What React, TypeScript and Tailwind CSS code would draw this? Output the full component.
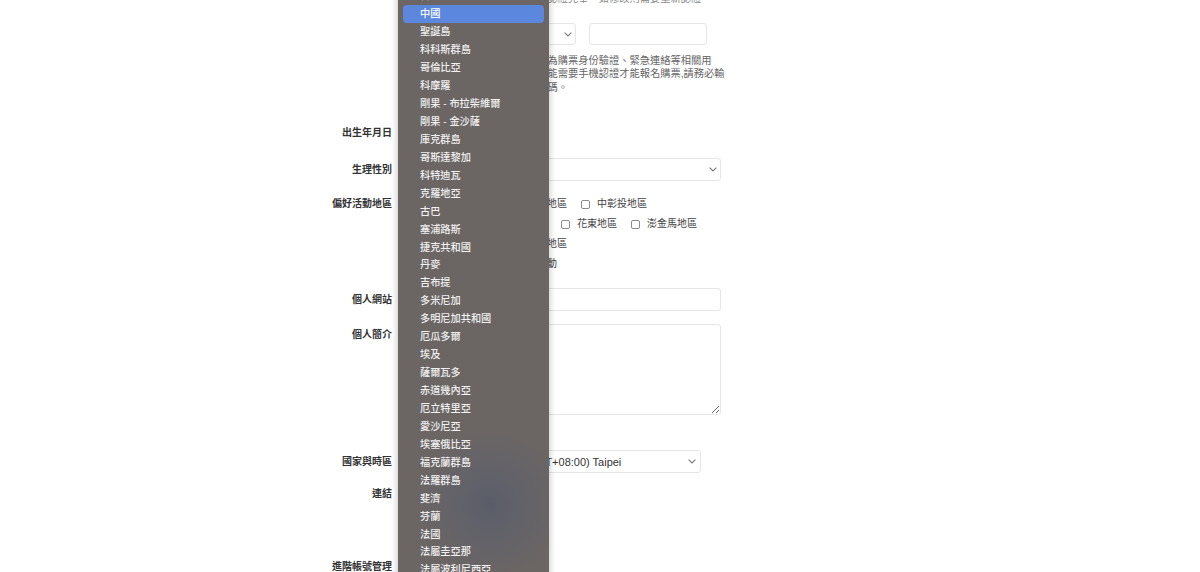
import type { ReactNode } from 'react'

// country picker list, opened over the profile form
const countries = [
  '中非共和國',
  '乍得',
  '智利',
  '中國',
  '聖誕島',
  '科科斯群島',
  '哥倫比亞',
  '科摩羅',
  '剛果 - 布拉柴維爾',
  '剛果 - 金沙薩',
  '庫克群島',
  '哥斯達黎加',
  '科特迪瓦',
  '克羅地亞',
  '古巴',
  '塞浦路斯',
  '捷克共和國',
  '丹麥',
  '吉布提',
  '多米尼加',
  '多明尼加共和國',
  '厄瓜多爾',
  '埃及',
  '薩爾瓦多',
  '赤道幾內亞',
  '厄立特里亞',
  '愛沙尼亞',
  '埃塞俄比亞',
  '福克蘭群島',
  '法羅群島',
  '斐濟',
  '芬蘭',
  '法國',
  '法屬圭亞那',
  '法屬波利尼西亞',
  '法屬南部領地',
  '加蓬',
]

const regionRows = [
  ['北北基宜地區', '桃竹苗地區', '中彰投地區'],
  ['雲嘉南地區', '高屏地區', '花東地區', '澎金馬地區'],
  ['全台地區', '海外及其他地區'],
  ['不限地區', '參加線上活動'],
]

function Chevron() {
  return (
    <svg viewBox="0 0 8 5" className="h-[5px] w-[8px] shrink-0" fill="none" stroke="#7a7a7a" strokeWidth="1.1">
      <path d="M0.6 0.6 L4 4 L7.4 0.6" />
    </svg>
  )
}

function SelectBox({ className, children }: { className: string; children?: ReactNode }) {
  return (
    <div
      className={`flex items-center justify-between rounded-[3px] border border-[#e6e6e6] bg-white pl-[11px] pr-[3px] ${className}`}
    >
      <span className="truncate text-[11px] leading-[14px] text-[#333]">{children}</span>
      <Chevron />
    </div>
  )
}

function Row({ label, labelClass = '', className = '', children }: { label: string; labelClass?: string; className?: string; children: ReactNode }) {
  return (
    <div className={`grid grid-cols-[92px_317px] gap-x-3 ${className}`}>
      <div className={`text-right text-[10px] font-semibold leading-[14px] text-[#333] ${labelClass}`}>{label}</div>
      <div>{children}</div>
    </div>
  )
}

const inputClass = 'block rounded-[3px] border border-[#e6e6e6] bg-white px-2 text-[11px] outline-none'

function ProfileForm() {
  return (
    <form className="ml-[300px] -mt-[22px] w-[421px]">
      <Row label="手機號碼">
        <div className="text-[11px] leading-[14px] text-[#333]">+886 0912-345-678</div>
        <p className="whitespace-nowrap text-[10.25px] leading-[14px] text-[#888]">
          目前登錄的手機號碼已於系統中認證完畢，如修改則需要重新認證。
        </p>
        <div className="mt-[17px] flex gap-[13px]">
          <SelectBox className="h-[22px] w-[172px]">台灣 +886</SelectBox>
          <input className={`${inputClass} h-[22px] w-[118px]`} />
        </div>
        <p className="mt-[8.5px] whitespace-nowrap text-[10.25px] leading-[13.5px] text-[#666]">
          您填寫的手機號碼將被本站用作為購票身份驗證、緊急連絡等相關用
          <br />
          途。此外，本站部分的活動也可能需要手機認證才能報名購票,請務必輸
          <br />
          入正確且可以正常使用的手機號碼。
        </p>
      </Row>

      <Row label="出生年月日" className="mt-[28px] items-center">
        <input defaultValue="1990/01/01" className={`${inputClass} h-[22px] w-[136px]`} />
      </Row>

      <Row label="生理性別" className="mt-[14px] items-center">
        <SelectBox className="h-[23px] w-full">請選擇</SelectBox>
      </Row>

      <Row label="偏好活動地區" labelClass="leading-[20px]" className="mt-[13px]">
        <div className="pl-[7px]">
          {regionRows.map((row, i) => (
            <div key={i} className="flex h-[20px] items-center">
              {row.map((name) => (
                <label key={name} className="mr-[14px] flex items-center gap-[7px] text-[10px] leading-[14px] text-[#444]">
                  <input
                    type="checkbox"
                    className="block h-[9px] w-[9px] appearance-none rounded-[2px] border border-[#8c8c8c] bg-white"
                  />
                  {name}
                </label>
              ))}
            </div>
          ))}
        </div>
      </Row>

      <Row label="個人網站" className="mt-[14px] items-center">
        <input className={`${inputClass} h-[23px] w-full`} />
      </Row>

      <Row label="個人簡介" labelClass="mt-[4px]" className="mt-[13px]">
        <textarea className={`${inputClass} h-[91px] w-full py-1`} />
        <div className="mt-[4px] text-[10px] leading-[14px] text-[#888]">限 500 字以內</div>
      </Row>

      <Row label="國家與時區" className="mt-[17px] items-center">
        <div className="flex gap-3">
          <SelectBox className="h-[23px] w-[96px]">台灣</SelectBox>
          <SelectBox className="h-[23px] w-[189px] pr-[4px]">(GMT+08:00) Taipei</SelectBox>
        </div>
      </Row>

      <Row label="連結" className="mt-[10px] items-center">
        <div className="flex h-[22px] items-center text-[10px] text-[#3b7dd8]">＋ 新增連結</div>
      </Row>

      <Row label="進階帳號管理" className="mt-[51px] items-center">
        <div className="flex h-[22px] items-center text-[10px] text-[#d9534f]">刪除帳號</div>
      </Row>
    </form>
  )
}

function CountryMenu() {
  const selected = '中國'
  return (
    <div className="absolute left-[398px] top-[-48.82px] z-10 h-[640px] w-[151px] overflow-hidden bg-[#6b6564] bg-[radial-gradient(circle_at_92px_553px,#5a5d68_0px,#62626a_30px,#6b6564_72px)] shadow-[0_0_7px_rgba(0,0,0,0.28)]">
      <ul>
        {countries.map((name) =>
          name === selected ? (
            <li
              key={name}
              className="mx-[5px] flex h-[17.94px] items-center rounded-[4px] bg-[#5b87df] pl-[17px] text-[10.2px] font-medium text-white"
            >
              {name}
            </li>
          ) : (
            <li key={name} className="flex h-[17.94px] items-center pl-[22px] text-[10.2px] font-medium text-[#f0f0f0]">
              {name}
            </li>
          ),
        )}
      </ul>
    </div>
  )
}

export default function App() {
  return (
    <div className="relative h-[572px] overflow-hidden bg-white font-['Liberation_Sans','Noto_Sans_CJK_TC',sans-serif]">
      <ProfileForm />
      <CountryMenu />
    </div>
  )
}
